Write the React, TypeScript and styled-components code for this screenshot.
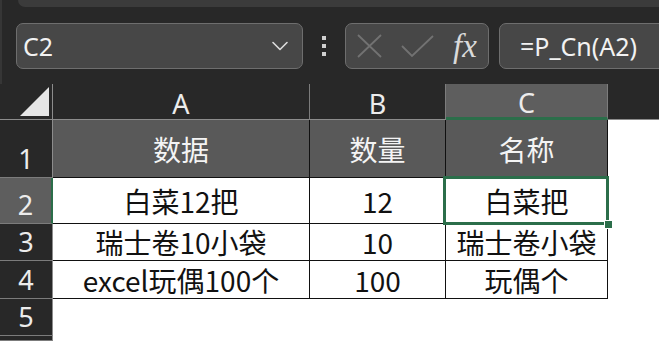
import { Fragment } from "react";
import styled, { createGlobalStyle } from "styled-components";
import { ChevronDown } from "lucide-react";

const GlobalStyle = createGlobalStyle`
    html, body {
        margin: 0;
        padding: 0;
        height: 100%;
        overflow: hidden;
        background: #282828;
    }
    #root {
        height: 100%;
    }
`;

const GREEN = "#2b6e4a";

const Window = styled.div`
    height: 100%;
    display: flex;
    flex-direction: column;
    background: #282828;
    font-family: "Noto Sans", "Noto Sans CJK SC", sans-serif;
`;

const TopArea = styled.div`
    border-left: 2px solid #363636;
    padding-bottom: 15px;
`;

const Ribbon = styled.div`
    height: 7px;
    margin-left: 16px;
    background: #3b3b3b;
    border-bottom-left-radius: 8px;
`;

const FormulaBar = styled.div`
    display: flex;
    align-items: center;
    height: 46px;
    margin-top: 16px;
    padding-left: 14px;
`;

const Box = styled.div<{ $width?: number }>`
    box-sizing: border-box;
    height: 46px;
    display: flex;
    align-items: center;
    background: #474747;
    border: 1px solid #6e6e6e;
    border-radius: 7px;
    color: #f2f2f2;
    ${props => props.$width ? `width: ${props.$width}px; flex: none;` : "flex: 1;"}
`;

const NameText = styled.span`
    flex: 1;
    padding-left: 6px;
    font-size: 25px;
`;

const Chevron = styled.span`
    display: flex;
    padding-right: 8px;
    color: #dcdcdc;
`;

const Dots = styled.div`
    width: 42px;
    display: flex;
    flex-direction: column;
    align-items: center;
    gap: 4px;
    span {
        width: 4px;
        height: 4px;
        background: #d0d0d0;
    }
`;

const FxIcons = styled.div`
    display: flex;
    align-items: center;
    padding-left: 11px;
    gap: 19px;
`;

const Fx = styled.span`
    font-family: "Liberation Serif", serif;
    font-style: italic;
    font-size: 33px;
    color: #dadada;
    line-height: 1;
`;

const FormulaBox = styled(Box)`
    margin-left: 10px;
    margin-right: -12px;
`;

const FormulaText = styled.span`
    padding-left: 20px;
    font-size: 25px;
`;

const Sheet = styled.div`
    flex: 1;
    display: grid;
    grid-template-columns: 53px 257px 136px 162px 1fr;
    grid-template-rows: 36px 58px 46px 37px 38px 37px 1fr;
    background: #ffffff;
    overflow: hidden;
`;

const Corner = styled.div`
    box-sizing: border-box;
    background: #282828;
    border-right: 1px solid #8c8c8c;
    border-bottom: 1px solid #8c8c8c;
    display: flex;
    align-items: flex-end;
    justify-content: flex-end;
    padding: 0 3px 3px 0;
`;

const ColHeader = styled.div<{ $selected?: boolean; $last?: boolean }>`
    box-sizing: border-box;
    display: flex;
    align-items: center;
    justify-content: center;
    padding-top: 3px;
    font-size: 27px;
    color: #ececec;
    background: ${props => props.$selected ? "#5e5e5e" : "#282828"};
    border-right: ${props => props.$last ? "none" : "1px solid #7c7c7c"};
    border-bottom: ${props => props.$selected ? `3px solid ${GREEN}` : "1px solid #8c8c8c"};
`;

const RowHeader = styled.div<{ $selected?: boolean }>`
    box-sizing: border-box;
    display: flex;
    align-items: flex-end;
    justify-content: center;
    padding-bottom: 2px;
    font-size: 27px;
    line-height: 1.2;
    color: #ececec;
    background: ${props => props.$selected ? "#5e5e5e" : "#282828"};
    border-right: ${props => props.$selected ? `2px solid ${GREEN}` : "1px solid #8c8c8c"};
    border-bottom: 1px solid #7c7c7c;
    overflow: hidden;
`;

const Cell = styled.div<{ $title?: boolean; $selected?: boolean }>`
    box-sizing: border-box;
    position: relative;
    display: flex;
    align-items: center;
    justify-content: center;
    font-family: "Noto Sans CJK SC", sans-serif;
    font-size: 28px;
    white-space: nowrap;
    color: ${props => props.$title ? "#f4f4f4" : "#111111"};
    background: ${props => props.$title ? "#595959" : "#ffffff"};
    border-right: 1px solid #111111;
    border-bottom: 1px solid #111111;
    ${props => props.$selected && `
        z-index: 1;
        &::after {
            content: "";
            position: absolute;
            top: -2px;
            left: -3px;
            right: -2px;
            bottom: -2px;
            border: 3px solid ${GREEN};
        }
        &::before {
            content: "";
            position: absolute;
            right: -5px;
            bottom: -5px;
            width: 7px;
            height: 7px;
            background: ${GREEN};
            box-shadow: 0 0 0 1px #ffffff;
            z-index: 2;
        }
    `}
`;

const Blank = styled.div<{ $span?: number }>`
    background: #ffffff;
    ${props => props.$span ? `grid-column: span ${props.$span};` : ""}
`;

const rows = [
    { n: "1", cells: ["数据", "数量", "名称"], title: true },
    { n: "2", cells: ["白菜12把", "12", "白菜把"], selected: true },
    { n: "3", cells: ["瑞士卷10小袋", "10", "瑞士卷小袋"] },
    { n: "4", cells: ["excel玩偶100个", "100", "玩偶个"] },
];

function App() {
    return (
        <Window>
            <GlobalStyle />
            <TopArea>
                <Ribbon />
                <FormulaBar>
                    <Box $width={287}>
                        <NameText>C2</NameText>
                        <Chevron><ChevronDown size={28} strokeWidth={1.4} /></Chevron>
                    </Box>
                    <Dots><span /><span /><span /></Dots>
                    <Box $width={144}>
                        <FxIcons>
                            <svg width="25" height="24" viewBox="0 0 25 24">
                                <path d="M1 1 L24 23 M24 1 L1 23" stroke="#727272" strokeWidth="1.8" fill="none" />
                            </svg>
                            <svg width="33" height="23" viewBox="0 0 33 23">
                                <path d="M1 11 L11 21 L32 1" stroke="#727272" strokeWidth="1.8" fill="none" />
                            </svg>
                            <Fx>fx</Fx>
                        </FxIcons>
                    </Box>
                    <FormulaBox>
                        <FormulaText>=P_Cn(A2)</FormulaText>
                    </FormulaBox>
                </FormulaBar>
            </TopArea>
            <Sheet>
                <Corner>
                    <svg width="29" height="29" viewBox="0 0 29 29">
                        <polygon points="29,0 29,29 0,29" fill="#e6e6e6" />
                    </svg>
                </Corner>
                <ColHeader>A</ColHeader>
                <ColHeader>B</ColHeader>
                <ColHeader $selected>C</ColHeader>
                <ColHeader $last />
                {rows.map(row => (
                    <Fragment key={row.n}>
                        <RowHeader $selected={row.selected}>{row.n}</RowHeader>
                        {row.cells.map((text, idx) => (
                            <Cell key={idx} $title={row.title} $selected={row.selected && idx === 2}>{text}</Cell>
                        ))}
                        <Blank />
                    </Fragment>
                ))}
                <RowHeader>5</RowHeader>
                <Blank $span={4} />
                <RowHeader />
                <Blank $span={4} />
            </Sheet>
        </Window>
    );
}

export default App;
